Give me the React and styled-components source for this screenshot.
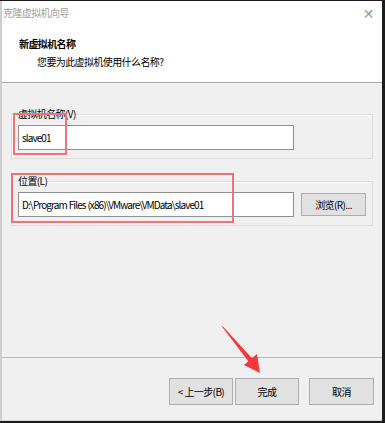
import React from 'react';
import styled, {createGlobalStyle} from 'styled-components';

const Global = createGlobalStyle`
  html, body {
    margin: 0;
    padding: 0;
    background: #1c1c1c;
  }
  body {
    font-family: "Noto Sans CJK SC", "Noto Sans", sans-serif;
    font-size: 10px;
    letter-spacing: -0.6px;
    color: #000;
  }
`;

const Screen = styled.div`
  width: 385px;
  height: 423px;
  padding-top: 1px;
  box-sizing: border-box;
  overflow: hidden;
`;

const Win = styled.div`
  position: relative;
  width: 382px;
  height: 420px;
  box-sizing: border-box;
  background: #f0f0f0;
  border-left: 2px solid #cfcfcf;
  border-bottom: 1px solid #d8d8d8;
  display: flex;
  flex-direction: column;
`;

const Header = styled.div`
  background: #fff;
  height: 82px;
  border-bottom: 1px solid #a9a9a9;
  box-sizing: border-box;
`;

const TitleBar = styled.div`
  display: flex;
  align-items: center;
  justify-content: space-between;
  height: 24px;
  padding: 0 8px 0 1px;
`;

const Title = styled.span`
  color: #a0a0a0;
  line-height: 1;
`;

const Close = styled.span`
  color: #9a9a9a;
  font-family: "DejaVu Sans", sans-serif;
  font-size: 14px;
  margin-top: 2px;
`;

const HeadTitle = styled.div`
  font-weight: bold;
  margin: 11px 0 0 17px;
  line-height: 16px;
`;

const HeadSub = styled.div`
  margin: 2px 0 0 35px;
  line-height: 16px;
`;

const Body = styled.div`
  flex: 1;
  padding: 24px 9px 0 9px;
  display: flex;
  flex-direction: column;
  gap: 15px;
  border-bottom: 1px solid #b9b9b9;
`;

const Group = styled.fieldset`
  margin: 0;
  padding: 4px 6px 8px 6px;
  border: 1px solid #dcdcdc;
  box-shadow: inset 1px 1px 0 #fff;
  width: 362px;
  box-sizing: border-box;
  display: flex;
  align-items: center;
  gap: 7px;
`;

const Legend = styled.legend`
  padding: 0;
  margin-left: 0;
  line-height: 14px;
`;

const Input = styled.div`
  width: ${p => p.w}px;
  height: 25px;
  box-sizing: border-box;
  background: #fff;
  border: 1px solid #8f8f8f;
  padding: 0 3px;
  display: flex;
  align-items: center;
  white-space: nowrap;
  letter-spacing: -0.9px;
  word-spacing: 0.5px;
`;

const Btn = styled.div`
  width: ${p => p.w || 64}px;
  height: ${p => p.h || 24}px;
  box-sizing: border-box;
  background: #e1e1e1;
  border: 1px solid #adadad;
  display: flex;
  align-items: center;
  justify-content: center;
  white-space: nowrap;
`;

const Footer = styled.div`
  height: 62px;
  display: flex;
  justify-content: flex-end;
  align-items: flex-start;
  padding: 20px 8px 0 0;
  box-sizing: border-box;
  gap: 2px;
`;

const Gap = styled.div`
  width: 6px;
`;

const Mark = styled.div`
  position: absolute;
  border: 2px solid #ec7478;
  box-sizing: border-box;
  pointer-events: none;
`;

const Arrow = styled.svg`
  position: absolute;
  left: 210px;
  top: 320px;
`;

export default function App() {
  return (
    <Screen>
      <Global />
      <Win>
        <Header>
          <TitleBar>
            <Title>克隆虚拟机向导</Title>
            <Close>✕</Close>
          </TitleBar>
          <HeadTitle>新虚拟机名称</HeadTitle>
          <HeadSub>您要为此虚拟机使用什么名称?</HeadSub>
        </Header>
        <Body>
          <Group>
            <Legend>虚拟机名称(V)</Legend>
            <Input w={276}>slave01</Input>
          </Group>
          <Group>
            <Legend>位置(L)</Legend>
            <Input w={276}>D:\Program Files (x86)\VMware\VMData\slave01</Input>
            <Btn w={65} h={23}>浏览(R)...</Btn>
          </Group>
        </Body>
        <Footer>
          <Btn w={64} h={27}>&lt; 上一步(B)</Btn>
          <Btn w={64} h={27}>完成</Btn>
          <Gap />
          <Btn w={65} h={27}>取消</Btn>
        </Footer>
        <Mark style={{left: 11, top: 112, width: 54, height: 42}} />
        <Mark style={{left: 9, top: 172, width: 223, height: 50}} />
        <Arrow width="60" height="60" viewBox="0 0 60 60">
          <polygon points="9.5,5 11,5.5 42,39.5 38,42.5" fill="#f2383a" />
          <polygon points="48,52 32,44 45,33" fill="#f2383a" />
        </Arrow>
      </Win>
    </Screen>
  );
}
